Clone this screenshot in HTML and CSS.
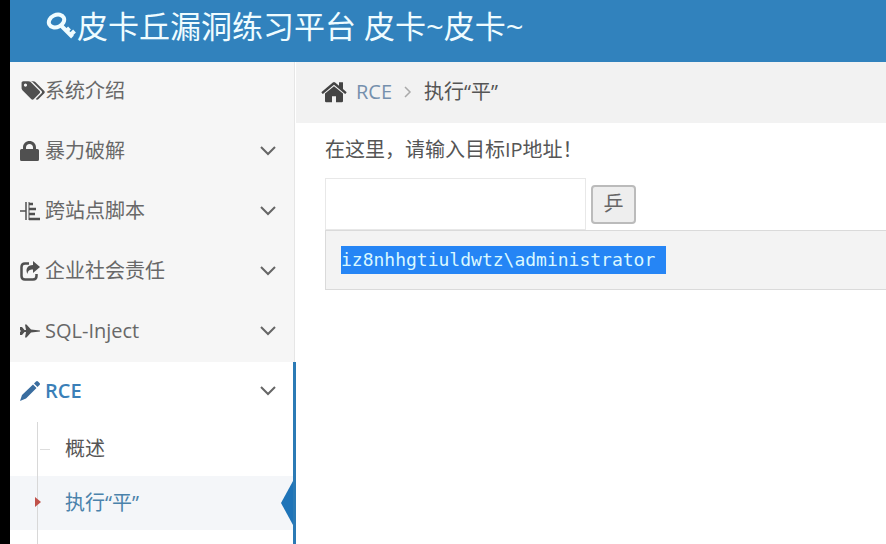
FILE: index.html
```html
<!DOCTYPE html>
<html lang="zh-CN">
<head>
    <meta charset="UTF-8">
    <meta name="viewport" content="width=device-width, initial-scale=1.0">
    <title>皮卡丘漏洞练习平台</title>
    <link rel="stylesheet" href="styles.css">
</head>
<body>

    <header class="navbar">
        <a href="#" class="brand">
            <svg class="icon-key" viewBox="0 0 30 28" aria-hidden="true">
                <ellipse cx="10" cy="9" rx="8" ry="6" transform="rotate(-25 10 9)" fill="none" stroke="currentColor" stroke-width="4"/>
                <path d="M14 13L26 25M19 20l4-4M23 24l5-5" fill="none" stroke="currentColor" stroke-width="4"/>
            </svg>
            <span>皮卡丘漏洞练习平台 皮卡~皮卡~</span>
        </a>
    </header>

    <div class="container">
        <nav class="sidebar">
            <ul class="menu">
                <li>
                    <a href="#">
                        <svg class="icon-tags" viewBox="0 192 2048 1472" aria-hidden="true"><path fill="currentColor" d="M576 448q0-53-37.500-90.500t-90.500-37.500-90.500 37.500-37.500 90.500 37.500 90.500 90.500 37.500 90.500-37.500 37.500-90.500zm1067 576q0 53-37 90l-491 492q-39 37-91 37-53 0-90-37l-715-716q-38-37-64.500-101t-26.500-117v-416q0-52 38-90t90-38h416q53 0 117 26.500t102 64.500l715 714q37 39 37 91zm384 0q0 53-37 90l-491 492q-39 37-91 37-36 0-59-14t-53-45l470-470q37-37 37-90 0-52-37-91l-715-714q-38-38-102-64.500t-117-26.500h224q53 0 117 26.500t102 64.500l715 714q37 39 37 91z"/></svg>
                        <span class="menu-text">系统介绍</span>
                    </a>
                </li>
                <li>
                    <a href="#">
                        <svg class="icon" viewBox="0 0 20 20" aria-hidden="true"><path fill="currentColor" fill-rule="evenodd" d="M3 8V6.500C3 2.500 6 0 9.500 0S16 2.500 16 6.500V8h1.500q1.500 0 1.500 1.500v9q0 1.500-1.500 1.500h-16Q0 20 0 18.500v-9Q0 8 1.500 8zM6 8h7V6.500C13 4.200 11.500 3 9.500 3S6 4.200 6 6.500z"/></svg>
                        <span class="menu-text">暴力破解</span>
                        <svg class="arrow" viewBox="0 0 16 10" aria-hidden="true"><path d="M1 1l7 7 7-7" fill="none" stroke="currentColor" stroke-width="2"/></svg>
                    </a>
                </li>
                <li>
                    <a href="#">
                        <svg class="icon" viewBox="0 0 20 20" aria-hidden="true"><path d="M0 10h6M6 1v18" fill="none" stroke="currentColor" stroke-width="1.500"/><path d="M9 3h4M9 8h7M9 13h6M9 18h11" fill="none" stroke="currentColor" stroke-width="2.500"/><path d="M9 1v18" fill="none" stroke="currentColor"/></svg>
                        <span class="menu-text">跨站点脚本</span>
                        <svg class="arrow" viewBox="0 0 16 10" aria-hidden="true"><path d="M1 1l7 7 7-7" fill="none" stroke="currentColor" stroke-width="2"/></svg>
                    </a>
                </li>
                <li>
                    <a href="#">
                        <svg class="icon" viewBox="0 0 20 20" aria-hidden="true"><path d="M9 2.500H5Q1.500 2.500 1.500 6v9q0 3.500 3.500 3.500h8q3.500 0 3.500-3.500v-2" fill="none" stroke="currentColor" stroke-width="2.500"/><path fill="currentColor" d="M13 0l7 6-7 6V8.500c-3.500 0-5 1-5.500 4.500C5 8 7.500 4 13 4z"/></svg>
                        <span class="menu-text">企业社会责任</span>
                        <svg class="arrow" viewBox="0 0 16 10" aria-hidden="true"><path d="M1 1l7 7 7-7" fill="none" stroke="currentColor" stroke-width="2"/></svg>
                    </a>
                </li>
                <li>
                    <a href="#">
                        <svg class="icon" viewBox="0 0 20 20" aria-hidden="true"><path fill="currentColor" d="M0 6h2l2.500 3H6L5 3.500h1.500L11 8.500l9 1v1l-9 1-4.500 5H5L6 11H4.500L2 14H0v-3l1-1-1-1z"/></svg>
                        <span class="menu-text">SQL-Inject</span>
                        <svg class="arrow" viewBox="0 0 16 10" aria-hidden="true"><path d="M1 1l7 7 7-7" fill="none" stroke="currentColor" stroke-width="2"/></svg>
                    </a>
                </li>
                <li class="open">
                    <a href="#">
                        <svg class="icon" viewBox="0 0 20 20" aria-hidden="true"><path fill="currentColor" d="M0 20l2-6L13 3.500 16.500 7 6 17.500zM14 2.500L16 .5q1-1 2 0L19.500 2q1 1 0 2l-2 2z"/></svg>
                        <span class="menu-text">RCE</span>
                        <svg class="arrow" viewBox="0 0 16 10" aria-hidden="true"><path d="M1 1l7 7 7-7" fill="none" stroke="currentColor" stroke-width="2"/></svg>
                    </a>
                    <ul class="submenu">
                        <li><a href="#">概述</a></li>
                        <li class="active"><a href="#">执行“平”</a></li>
                    </ul>
                </li>
            </ul>
        </nav>

        <main class="content">
            <div class="breadcrumbs">
                <svg class="icon-home" viewBox="64 220 1664 1332" aria-hidden="true"><path fill="currentColor" d="M1472 992v480q0 26-19 45t-45 19h-384v-384h-256v384h-384q-26 0-45-19t-19-45v-480q0-1 .5-3t.5-3l575-474 575 474q1 2 1 6zm223-69l-62 74q-8 9-21 11h-3q-13 0-21-7l-692-577-692 577q-12 8-24 7-13-2-21-11l-62-74q-8-10-7-23.500t11-21.500l719-599q32-26 76-26t76 26l244 204v-195q0-14 9-23t23-9h192q14 0 23 9t9 23v408l219 182q10 8 11 21.500t-7 23.500z"/></svg>
                <a href="#">RCE</a>
                <svg class="separator" viewBox="0 0 8 12" aria-hidden="true"><path d="M1 1l5 5-5 5" fill="none" stroke="currentColor" stroke-width="1.500"/></svg>
                <span>执行“平”</span>
            </div>

            <div class="page">
                <form class="ping-form">
                    <label for="ip">在这里，请输入目标IP地址！</label>
                    <div class="ping-row">
                        <input type="text" id="ip" name="ipaddress">
                        <button type="button">乒</button>
                    </div>
                </form>
                <pre class="result"><span class="selected">iz8nhhgtiuldwtz\administrator </span></pre>
            </div>
        </main>
    </div>

</body>
</html>
```
FILE: styles.css
```css
* {
    box-sizing: border-box;
}

body {
    margin: 0;
    min-height: 100vh;
    display: flex;
    flex-direction: column;
    border-left: 10px solid #000;
    background: #fff;
    color: #555;
    font-family: "Open Sans", "Noto Sans CJK SC", sans-serif;
    font-size: 20px;
    line-height: 28px;
}

a {
    color: inherit;
    text-decoration: none;
}

ul {
    list-style: none;
    margin: 0;
    padding: 0;
}

/* Top bar */
.navbar {
    height: 62px;
    padding: 0 36px;
    background: #3182bd;
    color: #effcff;
}

.brand {
    display: flex;
    align-items: center;
    height: 52px;
    font-size: 31px;
    white-space: nowrap;
}

.icon-key {
    width: 31px;
    height: 28px;
    flex: none;
}

.container {
    display: flex;
    flex: 1;
}

/* Sidebar */
.sidebar {
    display: flex;
    flex: none;
    width: 286px;
    background: linear-gradient(to right, #f6f6f6 284px, #e6e6e6 284px, #e6e6e6 285px, #fff 285px);
}

.menu {
    display: flex;
    flex-direction: column;
    width: 100%;
}

.menu > li > a {
    display: flex;
    align-items: center;
    height: 60px;
    padding: 0 20px 2px 10px;
    color: #686868;
}

.icon,
.icon-tags {
    width: 20px;
    height: 20px;
    margin-right: 5px;
    flex: none;
    color: #505050;
}

.icon-tags {
    width: 25px;
    margin-right: 0;
}

.menu-text {
    flex: 1;
}

.arrow {
    width: 16px;
    height: 10px;
    color: #666;
}

.menu > .open {
    flex: 1;
    background: #fff;
    border-right: 3px solid #2b7ab5;
}

.menu > .open > a {
    padding-right: 17px;
    color: #3a7fb8;
    font-weight: 600;
}

.open .icon {
    color: #3a6d9f;
}

.submenu {
    position: relative;
}

/* Tree line beside the sub items */
.submenu::before {
    content: "";
    position: absolute;
    z-index: 1;
    left: 27px;
    top: 0;
    height: 122px;
    border-left: 1px solid #d8d8d8;
}

.submenu li {
    position: relative;
}

.submenu li::before {
    content: "";
    position: absolute;
    z-index: 1;
    left: 30px;
    top: 27px;
    width: 10px;
    border-top: 1px solid #ddd;
}

.submenu a {
    display: block;
    padding: 13px 0 13px 55px;
}

.submenu .active {
    background: #f4f6f9;
    color: #4a82ab;
}

.submenu .active::before {
    left: 25px;
    top: 21px;
    width: 0;
    border-top: 5px solid transparent;
    border-bottom: 5px solid transparent;
    border-left: 6px solid #c0514a;
}

.submenu .active::after {
    content: "";
    position: absolute;
    right: 0;
    top: 5px;
    border-top: 22px solid transparent;
    border-bottom: 22px solid transparent;
    border-right: 12px solid #1f74b8;
}

/* Content */
.content {
    flex: 1;
    min-width: 0;
}

.breadcrumbs {
    display: flex;
    align-items: center;
    height: 61px;
    padding: 0 25px 2px;
    background: #f2f2f2;
}

.icon-home {
    width: 26px;
    height: 24px;
    color: #444;
}

.breadcrumbs a {
    margin-left: 9px;
    color: #7590ad;
}

.separator {
    width: 8px;
    height: 12px;
    margin: 0 12px;
    color: #aaa;
}

.page {
    padding: 13px 0 0 29px;
}

.ping-form label {
    display: block;
}

.ping-row {
    display: flex;
    align-items: center;
    gap: 5px;
    margin-top: 14px;
}

.ping-row input {
    width: 261px;
    height: 52px;
    padding: 8px;
    border: 1px solid #e8e8e8;
    background: #fff;
    color: inherit;
    font: inherit;
}

.ping-row button {
    width: 45px;
    height: 39px;
    padding: 0;
    border: 2px solid #bbb;
    border-radius: 4px;
    background: #eee;
    color: #666;
    font: inherit;
}

.result {
    margin: 0;
    padding: 15px;
    border: 1px solid #dadada;
    border-right: none;
    background: #f3f3f3;
    font-family: "DejaVu Sans Mono", monospace;
    font-size: 18px;
    line-height: 28px;
}

.selected {
    display: inline-block;
    background: #2585f5;
    color: #d9f8ff;
}
```
